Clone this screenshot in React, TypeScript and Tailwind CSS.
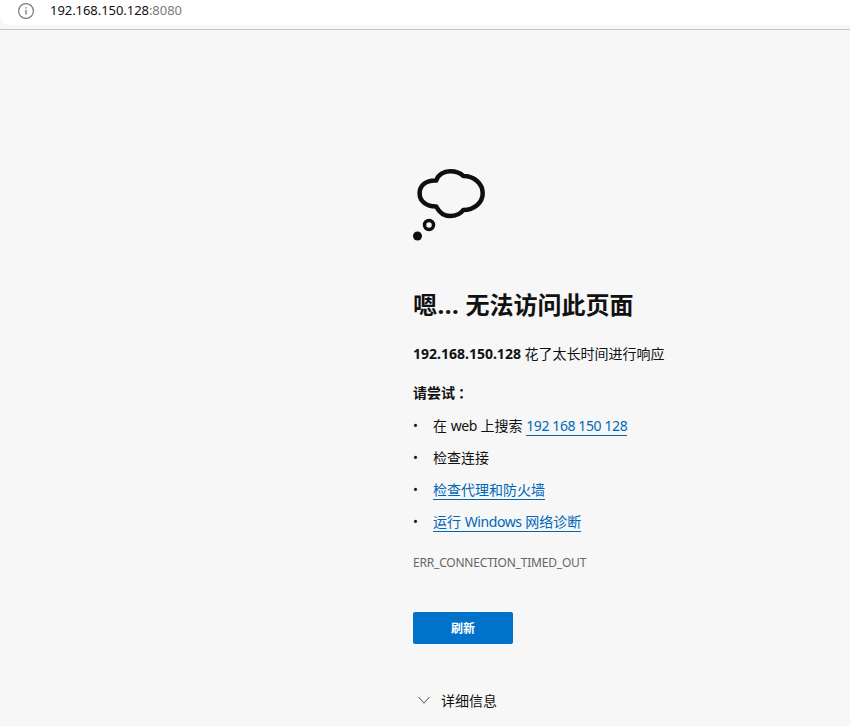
const cjk = "font-['Noto_Sans','Noto_Sans_CJK_SC',sans-serif]";

function InfoIcon() {
  return (
    <svg width="16" height="16" viewBox="0 0 16 16" fill="none" stroke="#7a7a7a" strokeWidth="1.2">
      <circle cx="8" cy="8" r="7.4" />
      <path d="M8 7v4.5M8 4.2v1.4" strokeWidth="1.4" />
    </svg>
  );
}

function ThoughtCloud() {
  return (
    <svg width="74" height="74" viewBox="0 0 74 74" fill="none" stroke="#0f0f0f">
      <path
        d="M23.2 12.5C25 6.5 31 3.2 37 3.2C42.5 3.2 47.5 5 50.3 8C61 8 69.7 15.5 69.7 25.3C69.7 35 61 42 50.3 42C47.5 46 42.5 48 37 48C31 48 26 44 23.2 38.5C13 38.5 6.6 33 6.6 25.3C6.6 17.5 13 12 23.2 12.5Z"
        strokeWidth="4.5"
        strokeLinejoin="round"
      />
      <circle cx="16" cy="57" r="4.5" strokeWidth="3.5" />
      <circle cx="4.5" cy="68" r="4.5" fill="#0f0f0f" stroke="none" />
    </svg>
  );
}

function Chevron() {
  return (
    <svg width="14" height="8" viewBox="0 0 14 8" fill="none" stroke="#6b6b6b" strokeWidth="1.1">
      <path d="M1.5 1l5.5 6 5.5-6" />
    </svg>
  );
}

function TryLink({ children }: { children: React.ReactNode }) {
  return <a className="text-[#0067b8] border-b border-[#0067b8] leading-[17px]">{children}</a>;
}

function Item({ children }: { children: React.ReactNode }) {
  return (
    <li className="flex items-center h-[32px]">
      <span className="w-[20px] text-[13px] leading-none text-[#111]">•</span>
      <span>{children}</span>
    </li>
  );
}

export default function App() {
  return (
    <div className={`${cjk} w-[850px] h-[726px] overflow-hidden bg-[#f7f7f7] text-[14px] text-[#111]`}>
      <header className="h-[30px] border-b border-[#c4c4c4]">
        <div className="flex items-center h-[25px] bg-white rounded-bl-[10px] pl-[18px] pb-[4px]">
          <InfoIcon />
          <span className="ml-[16px] text-[13px] leading-none tracking-[-0.05px] text-[#111]">
            192.168.150.128<span className="text-[#7a7a7a]">:8080</span>
          </span>
        </div>
      </header>

      <main className="pl-[413px] pt-[138px]">
        <ThoughtCloud />

        <h1 className="mt-[47px] text-[24px] leading-[32px] font-bold text-[#111]">
          <span className="tracking-[0.5px]">嗯...</span> 无法访问此页面
        </h1>

        <p className="mt-[23px] leading-[20px]">
          <strong>192.168.150.128</strong> 花了太长时间进行响应
        </p>

        <p className="mt-[19px] leading-[20px] font-semibold">
          请尝试<span className="ml-[3px]">：</span>
        </p>

        <ul className="mt-[6px]">
          <Item>
            在 <span className="tracking-[-0.4px]">web</span> 上搜索{" "}
            <TryLink>
              <span className="tracking-[-0.4px]">192 168 150 128</span>
            </TryLink>
          </Item>
          <Item>检查连接</Item>
          <Item>
            <TryLink>检查代理和防火墙</TryLink>
          </Item>
          <Item>
            <TryLink>
              运行 <span className="tracking-[-0.4px]">Windows</span> 网络诊断
            </TryLink>
          </Item>
        </ul>

        <p className="mt-[18px] text-[12px] leading-[16px] tracking-[-0.2px] text-[#666]">ERR_CONNECTION_TIMED_OUT</p>

        <button className="block mt-[41px] w-[100px] h-[32px] pt-px rounded-[2px] bg-[#0072c9] text-[12px] font-semibold text-white">
          刷新
        </button>

        <div className="flex items-center mt-[46px] pl-[4px] h-[20px]">
          <Chevron />
          <span className="ml-[10px]">详细信息</span>
        </div>
      </main>
    </div>
  );
}
